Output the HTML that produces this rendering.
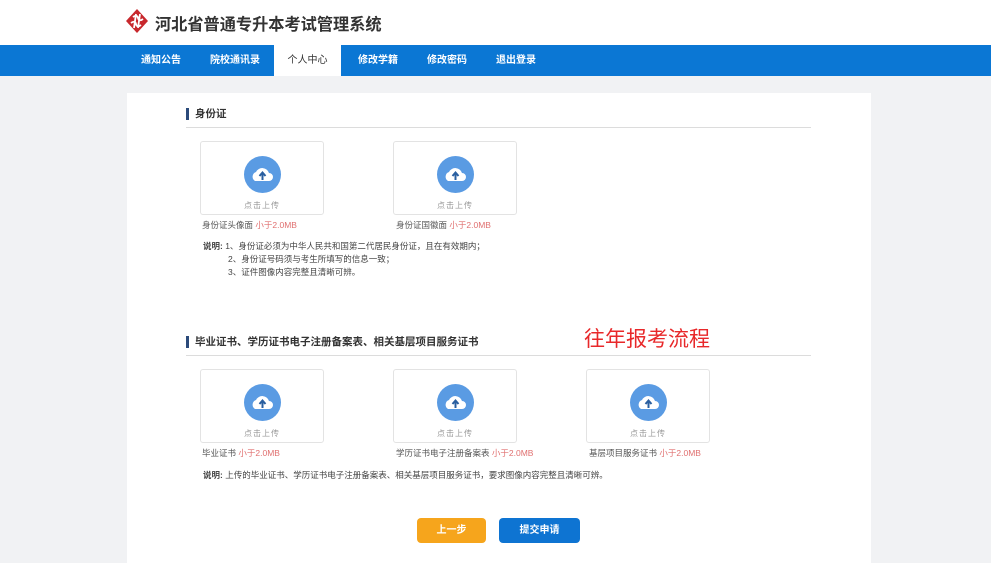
<!DOCTYPE html>
<html><head><meta charset="utf-8"><style>
*{margin:0;padding:0;box-sizing:border-box}
body{width:991px;height:558px;overflow:hidden;background:#f1f2f4;font-family:"Liberation Sans","Noto Sans CJK SC",sans-serif;position:relative;color:#333}
.a{position:absolute}
.hdr{left:0;top:0;width:991px;height:45px;background:#fff}
.nav{left:0;top:45px;width:991px;height:31px;background:#0b77d4}
.nav span{position:absolute;top:0;height:31px;line-height:31px;color:#fff;font-size:10px;font-weight:bold}
.card{left:127px;top:93px;width:744px;height:470px;background:#fff}
.sec{font-size:10.5px;font-weight:bold;color:#333}
.bar{width:3px;height:12px;background:#2b4a7a}
.line{height:1px;background:#dcdcdc}
.box{width:124px;height:74px;border:1px solid #e3e3e3;border-radius:3px;background:#fff}
.circ{position:absolute;left:43px;top:14px;width:37px;height:37px;border-radius:50%;background:#5a9be3}
.box .t{position:absolute;left:0;width:100%;top:58px;text-align:center;font-size:8px;color:#999;letter-spacing:1px}
.lbl{font-size:8.5px;color:#555}
.lbl i{font-style:normal;color:#e07070}
.note{font-size:8.5px;color:#444;line-height:13px}
.btn{height:25px;line-height:25px;border-radius:4px;color:#fff;text-align:center;font-size:10px;font-weight:bold}
</style></head><body>
<div class="a hdr"></div>
<svg class="a" style="left:125px;top:8px" width="24" height="26" viewBox="0 0 24 26"><path d="M12 1 L23 13 L12 25 L1 13Z" fill="#c8282d"/><path d="M8 9 q4 -3 5 1 t5 1 M6 15 q4 -3 5 1 t5 1 M11 6 L9 20 M15 6 L13 20" stroke="#fff" stroke-width="1.8" fill="none"/></svg>
<div class="a" style="left:155px;top:11px;font-size:16.2px;font-weight:bold;color:#333">河北省普通专升本考试管理系统</div>
<div class="a nav">
<span style="left:141px">通知公告</span>
<span style="left:210px">院校通讯录</span>
<span style="left:274px;width:67px;background:#fff;color:#333;text-align:center;font-weight:normal">个人中心</span>
<span style="left:358px">修改学籍</span>
<span style="left:427px">修改密码</span>
<span style="left:496px">退出登录</span>
</div>
<div class="a card"></div>

<div class="a bar" style="left:186px;top:108px"></div>
<div class="a sec" style="left:195px;top:106px">身份证</div>
<div class="a line" style="left:186px;top:127px;width:625px"></div>

<div class="a box" style="left:200px;top:141px"><div class="circ"><svg width="37" height="37" viewBox="0 0 37 37"><path d="M11 25 a5 5 0 0 1 1 -9 a7 7 0 0 1 13 1 a4 4 0 0 1 0 8Z" fill="#fff"/><path d="M18.5 24 V17 M15.5 20 L18.5 16.5 L21.5 20" stroke="#2a5fa0" stroke-width="2" fill="none"/></svg></div><div class="t">点击上传</div></div>
<div class="a box" style="left:393px;top:141px"><div class="circ"><svg width="37" height="37" viewBox="0 0 37 37"><path d="M11 25 a5 5 0 0 1 1 -9 a7 7 0 0 1 13 1 a4 4 0 0 1 0 8Z" fill="#fff"/><path d="M18.5 24 V17 M15.5 20 L18.5 16.5 L21.5 20" stroke="#2a5fa0" stroke-width="2" fill="none"/></svg></div><div class="t">点击上传</div></div>
<div class="a lbl" style="left:202px;top:219px">身份证头像面 <i>小于2.0MB</i></div>
<div class="a lbl" style="left:396px;top:219px">身份证国徽面 <i>小于2.0MB</i></div>
<div class="a note" style="left:203px;top:240px"><b>说明:</b> 1、身份证必须为中华人民共和国第二代居民身份证，且在有效期内；<br><span style="padding-left:25px">2、身份证号码须与考生所填写的信息一致；</span><br><span style="padding-left:25px">3、证件图像内容完整且清晰可辨。</span></div>

<div class="a" style="left:584px;top:323px;font-size:21px;color:#e8282a">往年报考流程</div>

<div class="a bar" style="left:186px;top:336px"></div>
<div class="a sec" style="left:195px;top:334px">毕业证书、学历证书电子注册备案表、相关基层项目服务证书</div>
<div class="a line" style="left:186px;top:355px;width:625px"></div>

<div class="a box" style="left:200px;top:369px"><div class="circ"><svg width="37" height="37" viewBox="0 0 37 37"><path d="M11 25 a5 5 0 0 1 1 -9 a7 7 0 0 1 13 1 a4 4 0 0 1 0 8Z" fill="#fff"/><path d="M18.5 24 V17 M15.5 20 L18.5 16.5 L21.5 20" stroke="#2a5fa0" stroke-width="2" fill="none"/></svg></div><div class="t">点击上传</div></div>
<div class="a box" style="left:393px;top:369px"><div class="circ"><svg width="37" height="37" viewBox="0 0 37 37"><path d="M11 25 a5 5 0 0 1 1 -9 a7 7 0 0 1 13 1 a4 4 0 0 1 0 8Z" fill="#fff"/><path d="M18.5 24 V17 M15.5 20 L18.5 16.5 L21.5 20" stroke="#2a5fa0" stroke-width="2" fill="none"/></svg></div><div class="t">点击上传</div></div>
<div class="a box" style="left:586px;top:369px"><div class="circ"><svg width="37" height="37" viewBox="0 0 37 37"><path d="M11 25 a5 5 0 0 1 1 -9 a7 7 0 0 1 13 1 a4 4 0 0 1 0 8Z" fill="#fff"/><path d="M18.5 24 V17 M15.5 20 L18.5 16.5 L21.5 20" stroke="#2a5fa0" stroke-width="2" fill="none"/></svg></div><div class="t">点击上传</div></div>
<div class="a lbl" style="left:202px;top:447px">毕业证书 <i>小于2.0MB</i></div>
<div class="a lbl" style="left:396px;top:447px">学历证书电子注册备案表 <i>小于2.0MB</i></div>
<div class="a lbl" style="left:589px;top:447px">基层项目服务证书 <i>小于2.0MB</i></div>
<div class="a note" style="left:203px;top:469px"><b>说明:</b> 上传的毕业证书、学历证书电子注册备案表、相关基层项目服务证书，要求图像内容完整且清晰可辨。</div>

<div class="a btn" style="left:417px;top:518px;width:69px;background:#f6a51c">上一步</div>
<div class="a btn" style="left:499px;top:518px;width:81px;background:#0e74d2">提交申请</div>
</body></html>
